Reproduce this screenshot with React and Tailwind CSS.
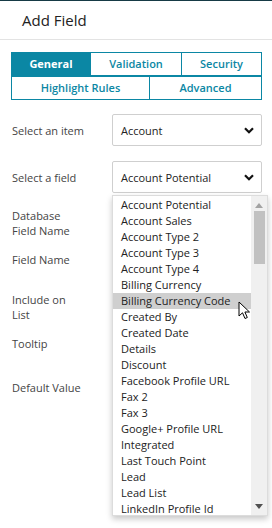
import React from 'react';

const fieldOptions = [
  'Account Potential',
  'Account Sales',
  'Account Type 2',
  'Account Type 3',
  'Account Type 4',
  'Billing Currency',
  'Billing Currency Code',
  'Created By',
  'Created Date',
  'Details',
  'Discount',
  'Facebook Profile URL',
  'Fax 2',
  'Fax 3',
  'Google+ Profile URL',
  'Integrated',
  'Last Touch Point',
  'Lead',
  'Lead List',
  'LinkedIn Profile Id',
];

const Chevron = () => (
  <svg width="10" height="7" viewBox="0 0 10 7" className="shrink-0">
    <path d="M1 1.2 L5 5.2 L9 1.2" fill="none" stroke="#111" strokeWidth="2.2" />
  </svg>
);

const SelectBox = ({ value }) => (
  <div className="flex items-center justify-between h-[32px] w-[150px] border border-[#cfcfcf] rounded-[2px] pl-[8px] pr-[7px] bg-white text-[11px] text-[#222]">
    <span>{value}</span>
    <Chevron />
  </div>
);

const Tab = ({ label, active, className }) => (
  <div
    className={
      'flex items-center justify-center h-full border border-[#0b87a4] text-[11px] ' +
      (active ? 'bg-[#0b87a4] text-white font-bold ' : 'bg-white text-[#0b87a4] font-semibold ') +
      className
    }
  >
    {label}
  </div>
);

export default function App() {
  return (
    <div
      className="relative w-[272px] h-[528px] overflow-hidden bg-white"
      style={{ fontFamily: '"Open Sans", "Liberation Sans", sans-serif' }}
    >
      {/* top edge */}
      <div className="h-[1px] bg-[#163a45]" />

      {/* header */}
      <div className="h-[39px] flex items-center pl-[22px] border-b border-[#e3e3e3]">
        <h2 className="text-[15px] text-[#222] pt-[1px]">Add Field</h2>
      </div>

      {/* tabs */}
      <div className="mx-[11px] mt-[12px] w-[251px]">
        <div className="grid grid-cols-[80px_91px_80px] h-[24px]">
          <Tab label="General" active />
          <Tab label="Validation" className="-ml-[1px]" />
          <Tab label="Security" className="-ml-[1px]" />
        </div>
        <div className="grid grid-cols-[139px_112px] h-[24px]">
          <Tab label="Highlight Rules" />
          <Tab label="Advanced" className="-ml-[1px]" />
        </div>
      </div>

      {/* form */}
      <div className="mt-[14px] pl-[12px] text-[11px] text-[#444] leading-[15px]">
        <div className="flex items-center">
          <span className="w-[100px]">Select an item</span>
          <SelectBox value="Account" />
        </div>
        <div className="flex items-center mt-[15px]">
          <span className="w-[100px]">Select a field</span>
          <SelectBox value="Account Potential" />
        </div>
        <div className="mt-[15px] w-[80px]">Database<br />Field Name</div>
        <div className="mt-[14px]">Field Name</div>
        <div className="mt-[25px]">Include on<br />List</div>
        <div className="mt-[14px]">Tooltip</div>
        <div className="mt-[29px]">Default Value</div>
      </div>

      {/* open dropdown list */}
      <div className="absolute left-[112px] top-[195px] w-[156px] h-[321px] flex bg-white border border-[#dcdcdc] shadow-[0_3px_6px_rgba(0,0,0,0.22)]">
        <ul className="flex-1 pt-[1px] text-[11px] text-[#222]">
          {fieldOptions.map((opt) => (
            <li
              key={opt}
              className={
                'h-[16px] leading-[16px] pl-[8px] whitespace-nowrap ' +
                (opt === 'Billing Currency Code' ? 'bg-[#cfcfcf]' : '')
              }
            >
              {opt}
            </li>
          ))}
        </ul>
        {/* scrollbar */}
        <div className="w-[16px] bg-[#f0f0f0] flex flex-col items-center">
          <svg width="8" height="5" viewBox="0 0 8 5" className="mt-[7px]">
            <path d="M0 5 L4 0 L8 5 Z" fill="#a3a3a3" />
          </svg>
          <div className="mt-[3px] w-[11px] h-[53px] bg-[#c1c1c1]" />
          <div className="flex-1" />
          <svg width="8" height="5" viewBox="0 0 8 5" className="mb-[6px]">
            <path d="M0 0 L8 0 L4 5 Z" fill="#505050" />
          </svg>
        </div>
      </div>

      {/* mouse pointer */}
      <svg className="absolute left-[238px] top-[301px]" width="13" height="19" viewBox="0 0 13 19">
        <path
          d="M1 1 L1 15 L4.5 11.8 L7 17.5 L9.3 16.5 L6.9 11 L11.5 11 Z"
          fill="#fff"
          stroke="#000"
          strokeWidth="1"
          strokeLinejoin="round"
        />
      </svg>
    </div>
  );
}
